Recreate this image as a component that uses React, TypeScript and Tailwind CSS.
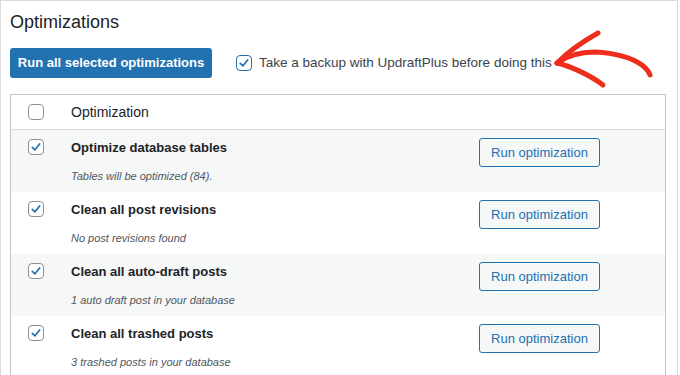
import React from "react";

const ROWS = [
  { title: "Optimize database tables", note: "Tables will be optimized (84).", shade: true },
  { title: "Clean all post revisions", note: "No post revisions found", shade: false },
  { title: "Clean all auto-draft posts", note: "1 auto draft post in your database", shade: true },
  { title: "Clean all trashed posts", note: "3 trashed posts in your database", shade: false },
];

function Box({ checked, focus }: { checked?: boolean; focus?: boolean }) {
  return (
    <span
      className={
        focus
          ? "flex h-4 w-4 shrink-0 items-center justify-center rounded-[4px] border-[1.5px] border-[#2271b1] bg-white"
          : "flex h-4 w-4 shrink-0 items-center justify-center rounded-[4px] border border-[#8c8f94] bg-white"
      }
    >
      {checked && (
        <svg viewBox="0 0 16 16" className="h-[14px] w-[14px]">
          <path d="M3.8 8.4 L6.8 11.2 L12.2 4.6" fill="none" stroke="#2271b1" strokeWidth="2" strokeLinecap="round" strokeLinejoin="round" />
        </svg>
      )}
    </span>
  );
}

export default function App() {
  return (
    <div className="relative h-[375px] w-[680px] overflow-hidden bg-white font-['Liberation_Sans',Arial,sans-serif] text-[#1d2327]">
      <div className="h-full w-[678px] border-l border-r border-t border-[#dcdcde] pl-[9px]">
        <h2 className="pt-[10px] text-[18px] leading-[22px] font-medium">Optimizations</h2>

        <div className="mt-[15px] flex items-center">
          <button className="h-[30px] w-[202px] rounded-[3px] bg-[#2271b1] text-[13px] font-bold text-white">
            Run all selected optimizations
          </button>
          <label className="ml-[24px] flex items-center gap-[7px] text-[13.5px] text-[#3c434a]">
            <Box checked focus />
            Take a backup with UpdraftPlus before doing this
          </label>
        </div>

        <div className="mt-[16px] w-[656px] border border-[#c3c4c7]">
          <div className="flex h-[35px] items-center border-b border-[#dcdcde] pl-[17px]">
            <Box />
            <span className="ml-[27px] text-[14px]">Optimization</span>
          </div>
          {ROWS.map((r) => (
            <div key={r.title} className={r.shade ? "flex h-[62px] bg-[#f6f7f7] pl-[17px]" : "flex h-[62px] bg-white pl-[17px]"}>
              <div className="pt-[9px]">
                <Box checked />
              </div>
              <div className="ml-[27px] flex-1 pt-[9px]">
                <p className="text-[13px] leading-[18px] font-bold">{r.title}</p>
                <p className="mt-[12px] text-[11px] leading-[14px] italic text-[#50575e]">{r.note}</p>
              </div>
              <div className="mr-[65px] pt-[8px]">
                <button className="h-[29px] w-[121px] rounded-[3px] border border-[#2271b1] bg-[#f6f7f7] text-[13px] text-[#2271b1]">
                  Run optimization
                </button>
              </div>
            </div>
          ))}
        </div>
      </div>

      <svg className="pointer-events-none absolute left-[548px] top-[28px] h-[64px] w-[110px]" viewBox="548 28 110 64">
        <g fill="none" stroke="#ef2d1c" strokeWidth="5" strokeLinecap="round" strokeLinejoin="round">
          <path d="M557 63 C566 54 582 42 598 33" />
          <path d="M557 63 C570 66 590 75 603 85" />
          <path d="M557 63 C568 55 580 52 595 52 C615 53 632 58 642 65 C647 69 649 72 650 75" />
        </g>
      </svg>
    </div>
  );
}
